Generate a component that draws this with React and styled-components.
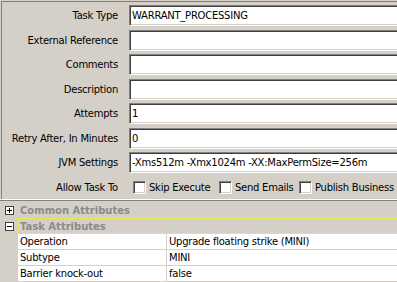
import React from 'react';
import styled, { createGlobalStyle } from 'styled-components';

const Global = createGlobalStyle`
  html, body { margin: 0; padding: 0; background: #d4d0c8; overflow: hidden; }
  body { font-family: "DejaVu Sans", Tahoma, sans-serif; font-size: 10px; letter-spacing: -0.25px; color: #000; }
  #root { width: 397px; height: 282px; overflow: hidden; }
`;

const Window = styled.div`
  width: 404px;
  height: 282px;
  display: flex;
  flex-direction: column;
  background: #d4d0c8;
  overflow: hidden;
`;

const FormPanel = styled.div`
  box-sizing: border-box;
  height: 199px;
  margin: 1px 0 0 1px;
  border-top: 1px solid #808080;
  border-left: 1px solid #808080;
  padding-top: 3px;
  display: grid;
  grid-template-columns: 116px 1fr;
  column-gap: 11px;
  row-gap: 3.5px;
  grid-auto-rows: 21px;
  align-items: center;
`;

const Label = styled.div`
  text-align: right;
  white-space: nowrap;
`;

const Field = styled.div`
  box-sizing: border-box;
  height: 21px;
  background: #fff;
  border-top: 1px solid #808080;
  border-left: 1px solid #808080;
  border-bottom: 1px solid #fff;
  border-right: 1px solid #fff;
  box-shadow: inset 1px 1px 0 #404040, inset -1px -1px 0 #d4d0c8;
  padding: 0 2px;
  line-height: 19px;
  white-space: nowrap;
  overflow: hidden;
`;

const CheckRow = styled.div`
  display: flex;
  align-items: center;
  padding-left: 4px;
`;

const CheckItem = styled.label`
  display: flex;
  align-items: center;
  gap: 3px;
  width: ${p => p.$w}px;
  flex: none;
  white-space: nowrap;
`;

const Box = styled.span`
  box-sizing: border-box;
  width: 13px;
  height: 13px;
  flex: none;
  background: #fff;
  border-top: 1px solid #808080;
  border-left: 1px solid #808080;
  border-bottom: 1px solid #fff;
  border-right: 1px solid #fff;
  box-shadow: inset 1px 1px 0 #404040, inset -1px -1px 0 #d4d0c8;
`;

const PropSection = styled.div`
  flex: 1;
  margin-top: 1px;
  border-top: 1px solid #808080;
  box-shadow: 0 -1px 0 #fff;
  padding-top: 2px;
  display: flex;
  flex-direction: column;
`;

const CategoryRow = styled.div`
  display: grid;
  grid-template-columns: 18px 1fr;
  height: ${p => (p.$tall ? 16 : 15)}px;
  align-items: center;
`;

const Expander = styled.span`
  box-sizing: border-box;
  width: 9px;
  height: 9px;
  margin-left: 5px;
  border: 1px solid #404040;
  background: #fff;
  position: relative;
  &::before {
    content: '';
    position: absolute;
    left: 1px;
    top: 3px;
    width: 5px;
    height: 1px;
    background: #000;
  }
  &::after {
    content: '';
    position: absolute;
    left: 3px;
    top: 1px;
    width: 1px;
    height: 5px;
    background: #000;
    display: ${p => (p.$open ? 'none' : 'block')};
  }
`;

const CategoryTitle = styled.div`
  box-sizing: border-box;
  height: 100%;
  font-weight: bold;
  letter-spacing: 0;
  color: #8a8a8a;
  display: flex;
  align-items: center;
  padding-left: 1px;
  border: 1px solid ${p => (p.$focus ? '#e8e858' : 'transparent')};
  border-right: none;
`;

const PropRow = styled.div`
  display: grid;
  grid-template-columns: 18px 149px 1fr;
  height: 16px;
`;

const Gutter = styled.div`
  background: #d4d0c8;
`;

const Cell = styled.div`
  box-sizing: border-box;
  background: #fff;
  border-bottom: 1px solid #d4d0c8;
  border-right: ${p => (p.$name ? '1px solid #d4d0c8' : 'none')};
  padding-left: 2px;
  line-height: 15px;
  white-space: nowrap;
  overflow: hidden;
`;

const fields = [
  ['Task Type', 'WARRANT_PROCESSING'],
  ['External Reference', ''],
  ['Comments', ''],
  ['Description', ''],
  ['Attempts', '1'],
  ['Retry After, In Minutes', '0'],
  ['JVM Settings', '-Xms512m -Xmx1024m -XX:MaxPermSize=256m'],
];

const checks = [
  ['Skip Execute', 86],
  ['Send Emails', 80],
  ['Publish Business', 120],
];

const props = [
  ['Operation', 'Upgrade floating strike (MINI)'],
  ['Subtype', 'MINI'],
  ['Barrier knock-out', 'false'],
];

export default function App() {
  return (
    <Window>
      <Global />
      <FormPanel>
        {fields.map(([l, v]) => (
          <React.Fragment key={l}>
            <Label>{l}</Label>
            <Field>{v}</Field>
          </React.Fragment>
        ))}
        <Label>Allow Task To</Label>
        <CheckRow>
          {checks.map(([c, w]) => (
            <CheckItem key={c} $w={w}>
              <Box />
              {c}
            </CheckItem>
          ))}
        </CheckRow>
      </FormPanel>
      <PropSection>
        <CategoryRow>
          <Expander />
          <CategoryTitle>Common Attributes</CategoryTitle>
        </CategoryRow>
        <CategoryRow $tall>
          <Expander $open />
          <CategoryTitle $focus>Task Attributes</CategoryTitle>
        </CategoryRow>
        {props.map(([n, v]) => (
          <PropRow key={n}>
            <Gutter />
            <Cell $name>{n}</Cell>
            <Cell>{v}</Cell>
          </PropRow>
        ))}
      </PropSection>
    </Window>
  );
}
